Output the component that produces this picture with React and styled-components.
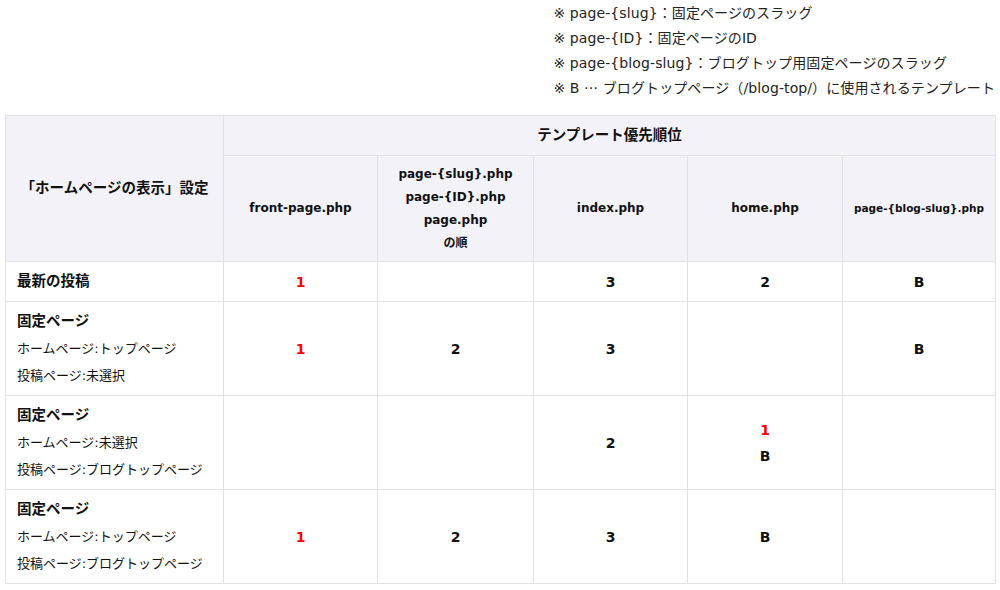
import React from 'react';
import styled, { createGlobalStyle } from 'styled-components';

const GlobalStyle = createGlobalStyle`
  body {
    margin: 0;
    background: #fff;
    color: #111;
    font-family: 'DejaVu Sans', 'Noto Sans CJK JP', sans-serif;
  }
`;

const Page = styled.div`
  padding: 0 5px;
  width: 990px;
`;

const Notes = styled.ul`
  list-style: none;
  margin: 0 0 14px auto;
  padding: 1px 0 0;
  width: fit-content;
  font-size: 14px;
  line-height: 25px;
  color: #222;
  letter-spacing: 0.1px;
`;

// the ellipsis sits on the middle line in the Japanese font
const Ellipsis = styled.span`
  display: inline-block;
  transform: translateY(-4px);
`;

const Table = styled.table`
  width: 990px;
  border-collapse: collapse;
  table-layout: fixed;
  border: 1px solid #e2e2e2;
  col:nth-child(1) { width: 218px; }
  col:nth-child(2) { width: 154px; }
  col:nth-child(3) { width: 156px; }
  col:nth-child(4) { width: 154px; }
  col:nth-child(5) { width: 155px; }
  col:nth-child(6) { width: 153px; }
`;

const Th = styled.th`
  background: #f2f2f8;
  border: 1px solid #e2e2e2;
  font-size: ${(p) => p.$size || '12px'};
  font-weight: bold;
  line-height: 23px;
  height: ${(p) => p.$h || 'auto'};
  text-align: center;
  padding: 0;
`;

const Td = styled.td`
  border: 1px solid #e2e2e2;
  font-size: 14px;
  font-weight: bold;
  line-height: 26px;
  text-align: center;
  padding: 0;
`;

const Label = styled.td`
  border: 1px solid #e2e2e2;
  padding: 6px 11px;
  line-height: 27px;
  vertical-align: middle;
  strong {
    display: block;
    font-size: 14.5px;
  }
  span {
    display: block;
    font-size: 13px;
  }
`;

const Red = styled.div`
  color: #ff0000;
`;

const rows = [
  { title: '最新の投稿', subs: [], cells: [<Red>1</Red>, '', '3', '2', 'B'] },
  {
    title: '固定ページ',
    subs: ['ホームページ:トップページ', '投稿ページ:未選択'],
    cells: [<Red>1</Red>, '2', '3', '', 'B'],
  },
  {
    title: '固定ページ',
    subs: ['ホームページ:未選択', '投稿ページ:ブログトップページ'],
    cells: ['', '', '2', <><Red>1</Red><div>B</div></>, ''],
  },
  {
    title: '固定ページ',
    subs: ['ホームページ:トップページ', '投稿ページ:ブログトップページ'],
    cells: [<Red>1</Red>, '2', '3', 'B', ''],
  },
];

export default function App() {
  return (
    <Page>
      <GlobalStyle />
      <Notes>
        <li>※ page-{'{slug}'}：固定ページのスラッグ</li>
        <li>※ page-{'{ID}'}：固定ページのID</li>
        <li>※ page-{'{blog-slug}'}：ブログトップ用固定ページのスラッグ</li>
        <li>
          ※ B <Ellipsis>…</Ellipsis> ブログトップページ（/blog-top/）に使用されるテンプレート
        </li>
      </Notes>
      <Table>
        <colgroup>
          <col /><col /><col /><col /><col /><col />
        </colgroup>
        <thead>
          <tr>
            <Th rowSpan={2} $size="14.5px">「ホームページの表示」設定</Th>
            <Th colSpan={5} $h="39px" $size="14.5px">テンプレート優先順位</Th>
          </tr>
          <tr>
            <Th $h="105px">front-page.php</Th>
            <Th>
              page-{'{slug}'}.php<br />page-{'{ID}'}.php<br />page.php<br />の順
            </Th>
            <Th>index.php</Th>
            <Th>home.php</Th>
            <Th $size="10.5px">page-{'{blog-slug}'}.php</Th>
          </tr>
        </thead>
        <tbody>
          {rows.map((r, i) => (
            <tr key={i}>
              <Label>
                <strong>{r.title}</strong>
                {r.subs.map((s) => (
                  <span key={s}>{s}</span>
                ))}
              </Label>
              {r.cells.map((c, j) => (
                <Td key={j}>{c}</Td>
              ))}
            </tr>
          ))}
        </tbody>
      </Table>
    </Page>
  );
}
